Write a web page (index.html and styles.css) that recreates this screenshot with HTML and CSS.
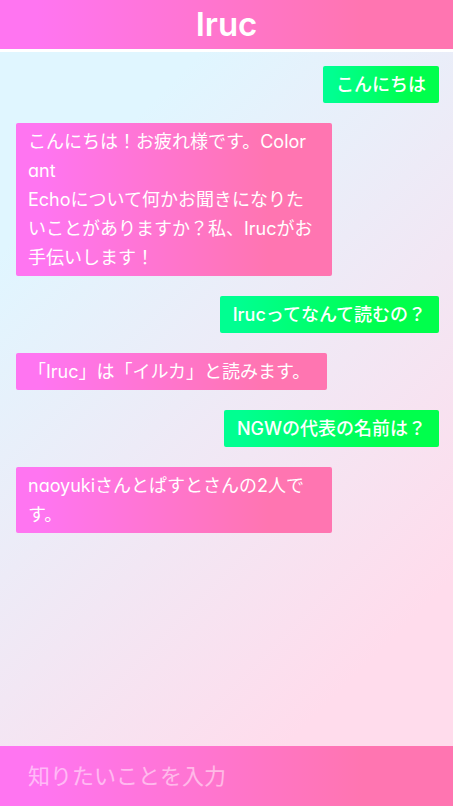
FILE: index.html
```html
<!DOCTYPE html>
<html lang="ja">
<head>
<meta charset="utf-8">
<meta name="viewport" content="width=device-width, initial-scale=1">
<title>Iruc</title>
<link rel="stylesheet" href="styles.css">
</head>
<body>
<header class="header"><h1 class="title">Iruc</h1></header>
<main class="chat">
<p class="message user">こんにちは</p>
<p class="message bot">こんにちは！お疲れ様です。Colorant<br>Echoについて何かお聞きになりたいことがありますか？私、Irucがお手伝いします！</p>
<p class="message user">Irucってなんて読むの？</p>
<p class="message bot">「Iruc」は「イルカ」と読みます。</p>
<p class="message user">NGWの代表の名前は？</p>
<p class="message bot">naoyukiさんとぱすとさんの2人です。</p>
</main>
<form class="composer"><input class="question" type="text" aria-label="知りたいことを入力" placeholder="知りたいことを入力"></form>
</body>
</html>
```
FILE: styles.css
```css
* {
  box-sizing: border-box;
}

body {
  margin: 0;
  min-height: 100vh;
  display: flex;
  flex-direction: column;
  color: #fff;
  font-family: Inter, "Noto Sans CJK JP", sans-serif;
  font-feature-settings: "cv11";
  background: linear-gradient(135deg, #e0f6ff 20%, #ffdcec 82%);
}

.header {
  padding: 4px 16px;
  border-bottom: 3px solid #fff;
  background: linear-gradient(90deg, #ff75f1 8%, #ff75b1 80%);
  text-align: center;
}

.title {
  margin: 0;
  font-size: 33px;
  font-weight: 600;
  line-height: 41px;
}

.chat {
  flex: 1;
  display: flex;
  flex-direction: column;
  gap: 20px;
  padding: 14px 14px 14px 16px;
}

.message {
  margin: 0;
  max-width: 316px;
  padding: 4px 13px;
  border-radius: 2px;
  font-size: 18px;
  line-height: 29px;
  word-break: break-all;
}

.user {
  align-self: flex-end;
  background: linear-gradient(90deg, #00ff91 8%, #00ff4c 75%);
  font-weight: 500;
}

.bot {
  align-self: flex-start;
  padding: 4px 17px 4px 12px;
  background: linear-gradient(90deg, #ff75f1 8%, #ff75b1 80%);
}

.composer {
  display: flex;
  background: linear-gradient(90deg, #ff75f1 8%, #ff75b1 80%);
}

.question {
  flex: 1;
  min-width: 0;
  padding: 14px 28px;
  border: 0;
  outline: 0;
  background: transparent;
  color: #fff;
  font: inherit;
  font-size: 22px;
  line-height: 32px;
}

.question::placeholder {
  color: #fff;
  opacity: 0.5;
}
```
